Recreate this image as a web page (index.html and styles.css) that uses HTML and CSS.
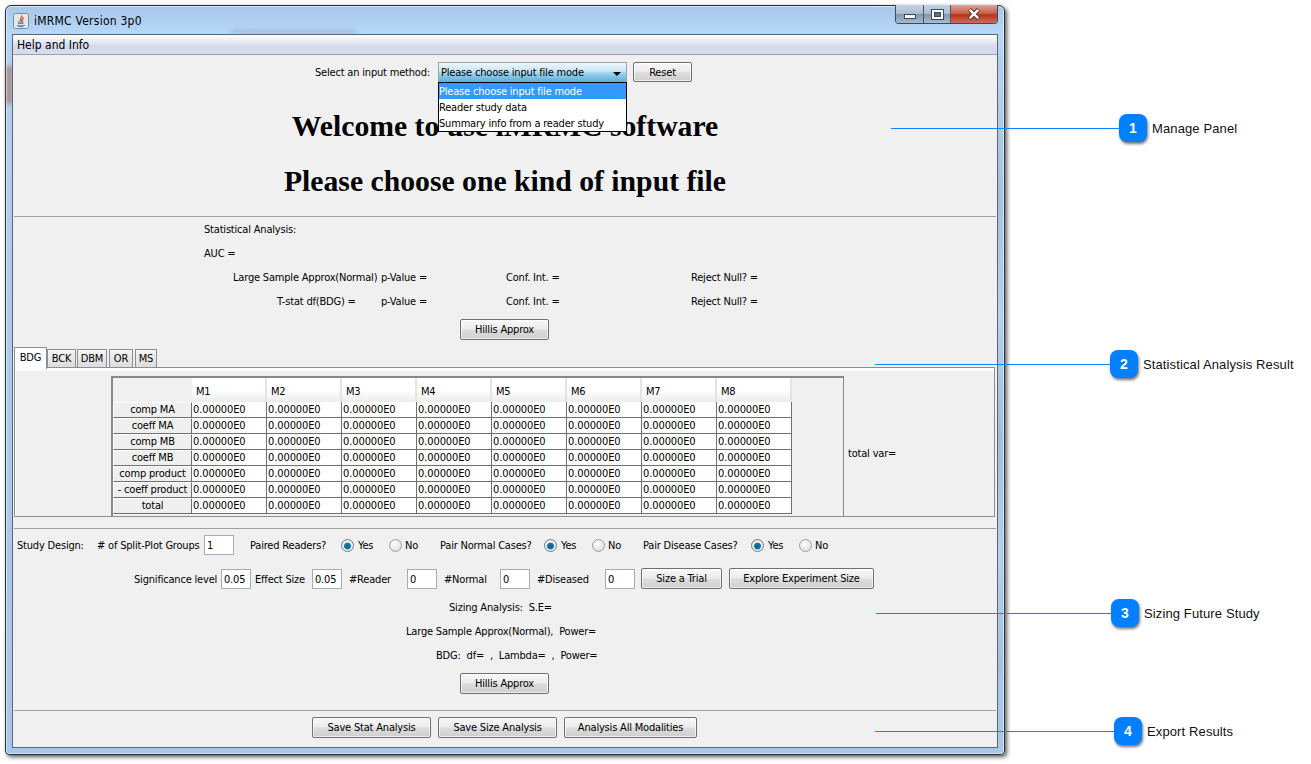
FILE: index.html
```html
<!DOCTYPE html>
<html lang="en">
<head>
<meta charset="utf-8">
<title>iMRMC Version 3p0</title>
<link rel="stylesheet" href="styles.css">
</head>
<body>
<div class="window">
  <div class="glass glass-a"></div>
  <div class="glass glass-b"></div>
  <div class="glass glass-c"></div>
  <header class="titlebar">
    <svg class="app-icon" width="16" height="16" viewBox="0 0 16 16">
      <rect x="0.5" y="0.5" width="15" height="15" rx="2" fill="#e4e8ee" stroke="#7f8a96"/>
      <path d="M8.6 2.4C9.6 4 6.6 5 7.2 6.8c.2.6.7 1 1 1.3C7.9 7 9.9 6 10 4.6 10.7 5.8 8.7 6.8 9 8.4" fill="none" stroke="#d9531e" stroke-width="1.1"/>
      <path d="M4.6 9h6.2M5 10.6h5.4M4 12.3c2 .8 6 .8 8 0M5.4 13.6h5" fill="none" stroke="#3f6ea5" stroke-width="0.9"/>
    </svg>
    <span class="title-text">iMRMC Version 3p0</span>
    <div class="controls">
      <div class="ctl ctl-min"><span class="glyph-min"></span></div>
      <div class="ctl ctl-max"><span class="glyph-max"></span></div>
      <div class="ctl ctl-close">
        <svg width="14" height="12" viewBox="0 0 14 12">
          <path d="M2.5 1.5 11.5 10.5M11.5 1.5 2.5 10.5" stroke="#3c2a28" stroke-width="4"/>
          <path d="M2.8 1.8 11.2 10.2M11.2 1.8 2.8 10.2" stroke="#fff" stroke-width="2.4"/>
        </svg>
      </div>
    </div>
  </header>
  <main class="client">
    <nav class="menubar"><span>Help and Info</span></nav>

    <section class="panel manage">
      <div class="select-row">
        <span class="select-label">Select an input method:</span>
        <div class="combo">
          <span>Please choose input file mode</span>
          <i class="combo-arrow"></i>
          <ul class="dropdown">
            <li class="selected">Please choose input file mode</li>
            <li>Reader study data</li>
            <li>Summary info from a reader study</li>
          </ul>
        </div>
        <button class="btn btn-reset">Reset</button>
      </div>
      <h1 class="banner banner-first">Welcome to use iMRMC software</h1>
      <h1 class="banner banner-second">Please choose one kind of input file</h1>
    </section>

    <section class="panel stat">
      <div class="line stat-title">Statistical Analysis:</div>
      <div class="line stat-title">AUC =</div>
      <div class="line stat-grid">
        <span class="large-label">Large Sample Approx(Normal)</span>
        <span>p-Value =</span><span>Conf. Int. =</span><span>Reject Null? =</span>
      </div>
      <div class="line stat-grid">
        <span class="tstat-label">T-stat df(BDG) =</span>
        <span>p-Value =</span><span>Conf. Int. =</span><span>Reject Null? =</span>
      </div>
      <div class="center-row hillis-stat"><button class="btn btn-hillis">Hillis Approx</button></div>
      <div class="tabs">
        <span class="tab tab-active tab-bdg">BDG</span>
        <span class="tab tab-bck">BCK</span>
        <span class="tab tab-dbm">DBM</span>
        <span class="tab tab-or">OR</span>
        <span class="tab tab-ms">MS</span>
      </div>
      <div class="tab-pane">
        <div class="table-box">
          <div class="grid">
            <div class="corner"></div>
            <div class="head">M1</div><div class="head">M2</div><div class="head">M3</div><div class="head">M4</div><div class="head">M5</div><div class="head">M6</div><div class="head">M7</div><div class="head">M8</div>

            <div class="rowhead">comp MA</div><div class="cell">0.00000E0</div><div class="cell">0.00000E0</div><div class="cell">0.00000E0</div><div class="cell">0.00000E0</div><div class="cell">0.00000E0</div><div class="cell">0.00000E0</div><div class="cell">0.00000E0</div><div class="cell">0.00000E0</div>
            <div class="rowhead">coeff MA</div><div class="cell">0.00000E0</div><div class="cell">0.00000E0</div><div class="cell">0.00000E0</div><div class="cell">0.00000E0</div><div class="cell">0.00000E0</div><div class="cell">0.00000E0</div><div class="cell">0.00000E0</div><div class="cell">0.00000E0</div>
            <div class="rowhead">comp MB</div><div class="cell">0.00000E0</div><div class="cell">0.00000E0</div><div class="cell">0.00000E0</div><div class="cell">0.00000E0</div><div class="cell">0.00000E0</div><div class="cell">0.00000E0</div><div class="cell">0.00000E0</div><div class="cell">0.00000E0</div>
            <div class="rowhead">coeff MB</div><div class="cell">0.00000E0</div><div class="cell">0.00000E0</div><div class="cell">0.00000E0</div><div class="cell">0.00000E0</div><div class="cell">0.00000E0</div><div class="cell">0.00000E0</div><div class="cell">0.00000E0</div><div class="cell">0.00000E0</div>
            <div class="rowhead">comp product</div><div class="cell">0.00000E0</div><div class="cell">0.00000E0</div><div class="cell">0.00000E0</div><div class="cell">0.00000E0</div><div class="cell">0.00000E0</div><div class="cell">0.00000E0</div><div class="cell">0.00000E0</div><div class="cell">0.00000E0</div>
            <div class="rowhead">- coeff product</div><div class="cell">0.00000E0</div><div class="cell">0.00000E0</div><div class="cell">0.00000E0</div><div class="cell">0.00000E0</div><div class="cell">0.00000E0</div><div class="cell">0.00000E0</div><div class="cell">0.00000E0</div><div class="cell">0.00000E0</div>
            <div class="rowhead">total</div><div class="cell">0.00000E0</div><div class="cell">0.00000E0</div><div class="cell">0.00000E0</div><div class="cell">0.00000E0</div><div class="cell">0.00000E0</div><div class="cell">0.00000E0</div><div class="cell">0.00000E0</div><div class="cell">0.00000E0</div>
          </div>
        </div>
        <div class="total-var">total var=</div>
      </div>
    </section>

    <section class="panel sizing">
      <div class="study-row">
        <span class="row-text">Study Design:</span>
        <span class="row-text"># of Split-Plot Groups</span>
        <span class="field">1</span>
        <span class="row-text cell-gap">Paired Readers?</span>
        <i class="radio radio-on"></i><span class="row-text">Yes</span>
        <i class="radio"></i><span class="row-text">No</span>
        <span class="row-text">Pair Normal Cases?</span>
        <i class="radio radio-on"></i><span class="row-text">Yes</span>
        <i class="radio"></i><span class="row-text">No</span>
        <span class="row-text">Pair Disease Cases?</span>
        <i class="radio radio-on"></i><span class="row-text">Yes</span>
        <i class="radio"></i><span class="row-text">No</span>
      </div>
      <div class="trial-row">
        <span class="row-text">Significance level</span>
        <span class="field">0.05</span>
        <span class="row-text">Effect Size</span>
        <span class="field">0.05</span>
        <span class="row-text">#Reader</span>
        <span class="field">0</span>
        <span class="row-text">#Normal</span>
        <span class="field">0</span>
        <span class="row-text">#Diseased</span>
        <span class="field">0</span>
        <button class="btn">Size a Trial</button>
        <button class="btn">Explore Experiment Size</button>
      </div>
      <div class="line size-a">Sizing Analysis:&nbsp; S.E=</div>
      <div class="line size-b">Large Sample Approx(Normal),&nbsp; Power=</div>
      <div class="line size-c">BDG:&nbsp; df=&nbsp; ,&nbsp; Lambda=&nbsp; ,&nbsp; Power=</div>
      <div class="center-row hillis-size"><button class="btn btn-hillis">Hillis Approx</button></div>
    </section>

    <section class="export">
      <button class="btn btn-save">Save Stat Analysis</button>
      <button class="btn btn-save">Save Size Analysis</button>
      <button class="btn btn-all">Analysis All Modalities</button>
    </section>
  </main>
</div>

<div class="callout callout-1"><i class="lead"></i><b class="badge">1</b><span class="callout-text">Manage Panel</span></div>
<div class="callout callout-2"><i class="lead"></i><b class="badge">2</b><span class="callout-text">Statistical Analysis Result</span></div>
<div class="callout callout-3"><i class="lead"></i><b class="badge">3</b><span class="callout-text">Sizing Future Study</span></div>
<div class="callout callout-4"><i class="lead"></i><b class="badge">4</b><span class="callout-text">Export Results</span></div>
</body>
</html>
```
FILE: styles.css
```css
* { box-sizing: border-box; }
html, body { margin: 0; height: 100%; }
body {
  background: #fff;
  position: relative;
  overflow: hidden;
  font: 11px/16px "DejaVu Sans Condensed", "DejaVu Sans", sans-serif;
  font-stretch: condensed;
  letter-spacing: -.19px;
  color: #000;
}

/* window on the desktop */
.window {
  position: absolute;
  left: 5px;
  top: 5px;
  width: 1000px;
  height: 750px;
  padding: 0 7px 6px 6px;
  border: 1px solid #2b2f33;
  border-radius: 6px 6px 4px 4px;
  box-shadow: 2px 2px 4px rgba(0, 0, 0, .65), inset 0 0 0 1px rgba(255, 255, 255, .55);
  background:
    linear-gradient(180deg, #a7c8ea 0, #b6d7f7 28px, #b0cfee 60px, #a8c6e6 100%);
  display: flex;
  flex-direction: column;
}
.glass { position: absolute; filter: blur(2px); }
.glass-a { left: 1px; top: 60px; width: 5px; height: 38px; background: #a88080; }
.glass-b { left: 225px; top: 24px; width: 125px; height: 3px; background: #9db6d0; }
.glass-c { left: 990px; top: 70px; width: 5px; height: 600px; background: linear-gradient(180deg, #b9d4ee, #9cb6d0 20%, #bcd6f0 40%, #9ab4ce 60%, #bcd6f0 80%, #a0bad4); }

.titlebar {
  height: 28px;
  flex: none;
  display: flex;
  align-items: flex-start;
  position: relative;
  padding-left: 1px;
}
.app-icon { margin: 7px 5px 0 0; flex: none; }
.title-text { font-size: 12px; line-height: 16px; margin-top: 7px; letter-spacing: .24px; color: #000; }
.controls {
  margin-left: auto;
  margin-right: -1px;
  display: flex;
  height: 19px;
  margin-top: -1px;
  border: 1px solid #3f4a55;
  border-top: 0;
  border-radius: 0 0 4px 4px;
  overflow: hidden;
}
.ctl { display: flex; align-items: center; justify-content: center; border-right: 1px solid #4a5866;
  background: linear-gradient(180deg, #c5d5e5 0, #a9bccf 48%, #7f97ad 52%, #a6bccf 100%); }
.ctl-min { width: 28px; }
.ctl-max { width: 27px; }
.ctl-close { width: 46px; border-right: 0; background: linear-gradient(180deg, #d9a79e 0, #c9604a 45%, #b8321e 55%, #cf6d5a 100%); }
.glyph-min { width: 12px; height: 5px; margin-top: 5px; background: #fff; border: 1px solid #3c4a58; }
.glyph-max { width: 11px; height: 9px; border: 2px solid #fff; outline: 1px solid #3c4a58; background: #5f7285; box-shadow: inset 0 0 0 1px #3c4a58; }

.client {
  flex: none;
  width: 986px;
  height: 714px;
  background: #f0f0f0;
  border: 1px solid #5b6670;
  display: flex;
  flex-direction: column;
  position: relative;
}
.menubar {
  flex: none;
  height: 20px;
  padding: 1px 4px 0;
  font-size: 12px;
  line-height: 18px;
  letter-spacing: 0;
  border-bottom: 1px solid #9a9fa8;
  background: linear-gradient(180deg, #fdfdfe 0, #e8ebf5 35%, #d4d9ec 60%, #d8dcee 100%);
}
.panel { margin: 0 1px; flex: none; border-bottom: 1px solid #a0a0a0; }

/* manage */
.manage { height: 162px; }
.select-row { display: flex; align-items: center; height: 20px; margin-top: 7px; padding-left: 301px; position: relative; z-index: 2; }
.select-label { width: 123px; padding-top: 2px; }
.combo {
  width: 189px; height: 20px; position: relative;
  border: 1px solid #9aa3ab;
  padding-left: 2px;
  line-height: 20px;
  background: linear-gradient(180deg, #eef7fc 0, #c9e6f5 45%, #a1d2ec 55%, #62b2dd 100%);
}
.combo-arrow { position: absolute; right: 5px; top: 9px; border: 4px solid transparent; border-top: 4px solid #000; border-bottom: 0; }
.dropdown {
  position: absolute; left: -1px; top: 19px; width: 189px; height: 50px;
  margin: 0; padding: 0; list-style: none;
  background: #fff; border: 1px solid #000;
}
.dropdown li { height: 16px; line-height: 18px; white-space: nowrap; }
.dropdown .selected { background: #3399ff; color: #fff; }
.btn {
  display: block;
  margin: 0; padding: 0;
  font: inherit;
  letter-spacing: inherit;
  color: #000;
  height: 21px;
  line-height: 18px;
  border: 1px solid #707070;
  border-radius: 2px;
  background: linear-gradient(180deg, #f8f8f8 0, #ececec 45%, #dcdcdc 55%, #cfcfcf 100%);
  box-shadow: inset 0 0 0 1px rgba(255,255,255,.6);
  text-align: center;
  white-space: nowrap;
}
.btn-reset { width: 59px; height: 20px; margin-left: 6px; padding-top: 2px; line-height: 16px; }
.banner {
  margin: 0;
  text-align: center;
  letter-spacing: 0;
  font: bold 29.7px/34px "Liberation Serif", serif;
}
.banner-first { margin-top: 27px; }
.banner-second { margin-top: 21px; }

/* statistics */
.stat { height: 312px; }
.line { height: 24px; padding-top: 1px; line-height: 24px; white-space: nowrap; }
.stat-title { padding-left: 190px; }
.stat-grid { display: grid; grid-template-columns: 367px 125px 185px auto; }
.large-label { padding-left: 219px; }
.tstat-label { padding-left: 263px; }
.center-row { display: flex; justify-content: center; padding-right: 1px; }
.btn-hillis { width: 89px; }
.hillis-stat { margin-top: 6px; }
.tabs { display: flex; height: 21px; margin-top: 6px; align-items: flex-end; position: relative; z-index: 1; }
.tab {
  height: 18px; line-height: 18px; text-align: center;
  border: 1px solid #8a8f96; border-bottom: 0;
  background: linear-gradient(180deg, #f4f4f4, #dcdcdc);
}
.tab-active { height: 22px; margin-bottom: -2px; background: #fff; line-height: 19px; }
.tab-bdg { width: 33px; }
.tab-bck { width: 29px; }
.tab-dbm { width: 30px; margin-left: 1px; }
.tab-or { width: 24px; margin-left: 2px; }
.tab-ms { width: 22px; margin-left: 2px; }
.tab-pane {
  width: 981px; height: 150px;
  border: 1px solid #8a8f96;
  box-shadow: inset 1px 3px 0 #fff;
  padding: 8px 0 0 96px;
  display: flex;
}
.table-box { width: 733px; height: 140px; border: solid #888; border-width: 2px 1px 0 2px; flex: none; }
.grid { display: grid; grid-template-columns: 79px repeat(8, 75px); grid-template-rows: 24px repeat(7, 16px); width: 680px; }
.head {
  padding: 6px 0 0 4px;
  line-height: 16px;
  background: linear-gradient(180deg, #fff 0, #fff 50%, #ececec 100%);
  border-right: 2px solid #e4e4e4;
}
.rowhead {
  text-align: center;
  line-height: 13px;
  background: #efefef;
  border: 1px solid;
  border-color: #fff #6f6f6f #6f6f6f #fff;
  white-space: nowrap;
}
.cell { background: #fff; padding-left: 1px; line-height: 15px; letter-spacing: -.1px; border-right: 1px solid #707070; border-bottom: 1px solid #707070; }
.total-var { padding: 70px 0 0 4px; }

/* sizing */
.sizing { height: 182px; }
.study-row, .trial-row { display: grid; height: 20px; align-items: center; white-space: nowrap; }
.row-text { padding-top: 2px; }
.study-row {
  margin-top: 6px;
  padding-left: 3px;
  grid-template-columns: 80px 107px 30px 107px 17px 31px 16px 35px 104px 17px 31px 16px 35px 108px 17px 31px 16px auto;
}
.row-text.cell-gap { padding-left: 16px; }
.trial-row {
  margin-top: 13px;
  padding-left: 120px;
  grid-template-columns: 87px 34px 57px 37px 58px 37px 56px 37px 68px 36px 88px auto;
}
.trial-row .btn { width: 81px; height: 21px; }
.trial-row .btn:last-child { width: 145px; }
.field {
  display: block;
  width: 30px; height: 20px;
  line-height: 20px;
  padding-left: 2px;
  background: #fff;
  border: 1px solid #a5acb2;
}
.radio {
  display: block;
  width: 13px; height: 13px; border-radius: 50%;
  border: 1px solid #9aa0a6;
  background: radial-gradient(circle at 40% 35%, #fdfdfd 0, #e2e2e2 70%);
}
.radio-on { background: radial-gradient(circle at 50% 55%, #0a5f96 0, #1878ae 38%, #eeeeee 46%, #dedede 100%); border-color: #6f7d88; }
.size-a { margin-top: 7px; padding-left: 435px; }
.size-b { padding-left: 392px; }
.size-c { padding-left: 422px; }
.hillis-size { margin-top: 6px; }

/* export row */
.export { flex: 1; display: flex; justify-content: center; gap: 7px; padding: 6px 1px 0 0; }
.btn-save { width: 119px; }
.btn-all { width: 133px; }

/* callouts drawn over the screenshot */
.callout { position: absolute; height: 28px; display: flex; align-items: center; z-index: 5; }
.callout-1 { left: 891px; top: 114px; }
.callout-2 { left: 875px; top: 350px; }
.callout-3 { left: 876px; top: 599px; }
.callout-4 { left: 875px; top: 717px; }
.lead { display: block; height: 1px; background: #0a84ff; }
.callout-1 .lead { width: 228px; }
.callout-2 .lead { width: 235px; }
.callout-3 .lead { width: 235px; }
.callout-4 .lead { width: 239px; }
.badge {
  width: 28px; height: 28px; border-radius: 8px;
  background: #0080ff; color: #fff;
  font: bold 14px/28px "Liberation Sans", sans-serif;
  letter-spacing: 0;
  text-align: center;
  box-shadow: 1px 2px 3px rgba(0,0,0,.55);
}
.callout-text { margin: 1px 0 0 5px; font: 13px/16px "Liberation Sans", sans-serif; letter-spacing: .12px; color: #111; white-space: nowrap; }
```
